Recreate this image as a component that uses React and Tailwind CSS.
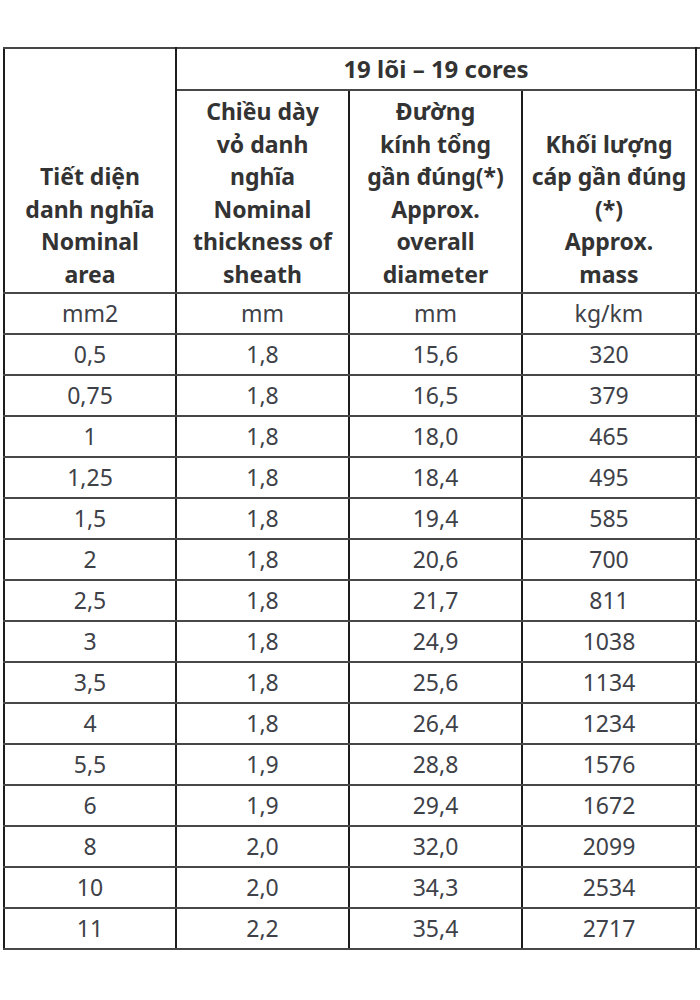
const rows = [
  ['0,5', '1,8', '15,6', '320'],
  ['0,75', '1,8', '16,5', '379'],
  ['1', '1,8', '18,0', '465'],
  ['1,25', '1,8', '18,4', '495'],
  ['1,5', '1,8', '19,4', '585'],
  ['2', '1,8', '20,6', '700'],
  ['2,5', '1,8', '21,7', '811'],
  ['3', '1,8', '24,9', '1038'],
  ['3,5', '1,8', '25,6', '1134'],
  ['4', '1,8', '26,4', '1234'],
  ['5,5', '1,9', '28,8', '1576'],
  ['6', '1,9', '29,4', '1672'],
  ['8', '2,0', '32,0', '2099'],
  ['10', '2,0', '34,3', '2534'],
  ['11', '2,2', '35,4', '2717'],
];

const cell = 'border-2 border-x-[#1c1c1c] border-y-[#474747] text-center p-0';

export default function App() {
  return (
    <div className="w-[700px] h-[1000px] overflow-hidden bg-white pl-[3px] pt-[47px] font-['Noto_Sans','Open_Sans',sans-serif]">
      <table className="table-fixed border-collapse w-[820px] text-[23px] text-[#3e4148]">
        <colgroup>
          <col className="w-[172px]" />
          <col className="w-[173px]" />
          <col className="w-[173px]" />
          <col className="w-[174px]" />
          <col className="w-[128px]" />
        </colgroup>
        <thead className="font-bold text-[#333] leading-[32.5px]">
          <tr className="h-[42px]">
            <th rowSpan={2} className={`${cell} align-bottom pb-[2px]`}>
              Tiết diện<br />danh nghĩa<br />Nominal<br />area
            </th>
            <th colSpan={3} className={`${cell} align-middle text-[24px]`}>19 lõi – 19 cores</th>
            <th className={cell}></th>
          </tr>
          <tr className="h-[203px]">
            <th className={`${cell} align-bottom pb-[2px]`}>
              Chiều dày<br />vỏ danh<br />nghĩa<br />Nominal<br />thickness of<br />sheath
            </th>
            <th className={`${cell} align-bottom pb-[2px]`}>
              Đường<br />kính tổng<br />gần đúng(*)<br />Approx.<br />overall<br />diameter
            </th>
            <th className={`${cell} align-bottom pb-[2px]`}>
              Khối lượng<br />cáp gần đúng<br />(*)<br />Approx.<br />mass
            </th>
            <th className={cell}></th>
          </tr>
        </thead>
        <tbody>
          <tr className="h-[41px]">
            <td className={cell}>mm2</td>
            <td className={cell}>mm</td>
            <td className={cell}>mm</td>
            <td className={cell}>kg/km</td>
            <td className={cell}></td>
          </tr>
          {rows.map((r) => (
            <tr key={r[0]} className="h-[41px]">
              {r.map((v, i) => (
                <td key={i} className={cell}>{v}</td>
              ))}
              <td className={cell}></td>
            </tr>
          ))}
        </tbody>
      </table>
    </div>
  );
}
